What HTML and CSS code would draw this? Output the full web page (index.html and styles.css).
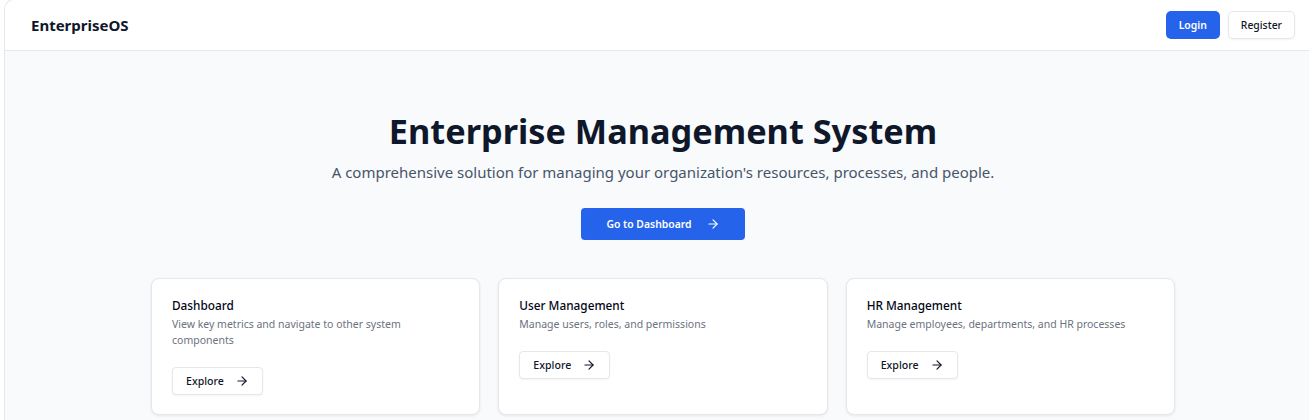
FILE: index.html
```html
<!DOCTYPE html>
<html lang="en">
<head>
<meta charset="utf-8">
<title>EnterpriseOS</title>
<link rel="stylesheet" href="styles.css">
</head>
<body>
<div class="frame">
  <header class="topbar">
    <div class="brand">EnterpriseOS</div>
    <nav class="auth">
      <a class="btn btn-primary btn-sm" href="#">Login</a>
      <a class="btn btn-outline btn-sm" href="#">Register</a>
    </nav>
  </header>
  <main class="main">
    <section class="hero">
      <h1 class="hero-title">Enterprise Management System</h1>
      <p class="hero-sub">A comprehensive solution for managing your organization's resources, processes, and people.</p>
      <a class="btn btn-primary btn-cta" href="#">Go to Dashboard
        <svg class="arrow" viewBox="0 0 24 24" fill="none" stroke="currentColor" stroke-width="2" stroke-linecap="round" stroke-linejoin="round"><path d="M5 12h14"/><path d="m12 5 7 7-7 7"/></svg>
      </a>
    </section>
    <section class="cards">
      <div class="card">
        <h3 class="card-title">Dashboard</h3>
        <p class="card-desc">View key metrics and navigate to other system components</p>
        <a class="btn btn-outline btn-explore" href="#">Explore
          <svg class="arrow" viewBox="0 0 24 24" fill="none" stroke="currentColor" stroke-width="2" stroke-linecap="round" stroke-linejoin="round"><path d="M5 12h14"/><path d="m12 5 7 7-7 7"/></svg>
        </a>
      </div>
      <div class="card">
        <h3 class="card-title">User Management</h3>
        <p class="card-desc">Manage users, roles, and permissions</p>
        <a class="btn btn-outline btn-explore" href="#">Explore
          <svg class="arrow" viewBox="0 0 24 24" fill="none" stroke="currentColor" stroke-width="2" stroke-linecap="round" stroke-linejoin="round"><path d="M5 12h14"/><path d="m12 5 7 7-7 7"/></svg>
        </a>
      </div>
      <div class="card">
        <h3 class="card-title">HR Management</h3>
        <p class="card-desc">Manage employees, departments, and HR processes</p>
        <a class="btn btn-outline btn-explore" href="#">Explore
          <svg class="arrow" viewBox="0 0 24 24" fill="none" stroke="currentColor" stroke-width="2" stroke-linecap="round" stroke-linejoin="round"><path d="M5 12h14"/><path d="m12 5 7 7-7 7"/></svg>
        </a>
      </div>
    </section>
  </main>
</div>
</body>
</html>
```

FILE: styles.css
```css
* { box-sizing: border-box; }
html, body { margin: 0; padding: 0; }
body {
  background: #ffffff;
  overflow: hidden;
  font-family: "Noto Sans", "Open Sans", sans-serif;
  color: #0f172a;
}
.frame {
  width: 1317px;
  margin-left: 4px;
  margin-top: -1px;
  border-left: 1px solid #e5e7eb;
  border-top: 1px solid #e5e7eb;
  border-top-left-radius: 10px;
  min-height: 430px;
  background: #f8fafc;
  overflow: hidden;
}
.topbar {
  height: 51px;
  display: flex;
  align-items: center;
  justify-content: space-between;
  padding: 0 26px;
  background: #ffffff;
  border-bottom: 1px solid #e5e7eb;
}
.brand {
  font-size: 15px;
  font-weight: 700;
  color: #0f172a;
}
.auth { display: flex; gap: 8px; }
.btn {
  display: inline-flex;
  align-items: center;
  justify-content: center;
  text-decoration: none;
  border-radius: 5px;
  font-size: 10.4px;
  font-weight: 500;
}
.btn-primary {
  background: #2563eb;
  color: #ffffff;
  font-weight: 600;
}
.btn-outline {
  background: #ffffff;
  color: #0f172a;
  border: 1px solid #e5e7eb;
  box-shadow: 0 1px 2px rgba(0,0,0,0.05);
}
.btn-sm { height: 28px; padding: 0 13px; }
.auth .btn-outline { padding: 0 12px; }
.main { padding-top: 60px; }
.hero {
  display: flex;
  flex-direction: column;
  align-items: center;
  text-align: center;
}
.hero-title {
  margin: 0;
  font-size: 34.3px;
  line-height: 40px;
  font-weight: 700;
  color: #0f172a;
}
.hero-sub {
  margin: 9px 0 0;
  font-size: 15px;
  line-height: 24px;
  color: #475569;
}
.btn-cta {
  margin-top: 24px;
  height: 32px;
  width: 164px;
  gap: 14px;
  border-radius: 4px;
}
.arrow { width: 14px; height: 14px; flex: none; }
.cards {
  width: 1024px;
  margin: 38px auto 0;
  display: grid;
  grid-template-columns: repeat(3, 1fr);
  gap: 18px;
}
.card {
  background: #ffffff;
  border: 1px solid #e5e7eb;
  border-radius: 8px;
  box-shadow: 0 1px 3px rgba(0,0,0,0.08);
  padding: 17px 20px 19px;
  display: flex;
  flex-direction: column;
  align-items: flex-start;
}
.card-title {
  margin: 0;
  font-size: 11.8px;
  line-height: 18px;
  font-weight: 500;
  color: #020617;
}
.card-desc {
  margin: 2px 0 0;
  font-size: 10.5px;
  line-height: 16px;
  color: #6b7280;
}
.btn-explore {
  margin-top: 19px;
  height: 28px;
  padding: 0 13px;
  gap: 11px;
  border-radius: 4px;
  font-size: 10.6px;
}
```
